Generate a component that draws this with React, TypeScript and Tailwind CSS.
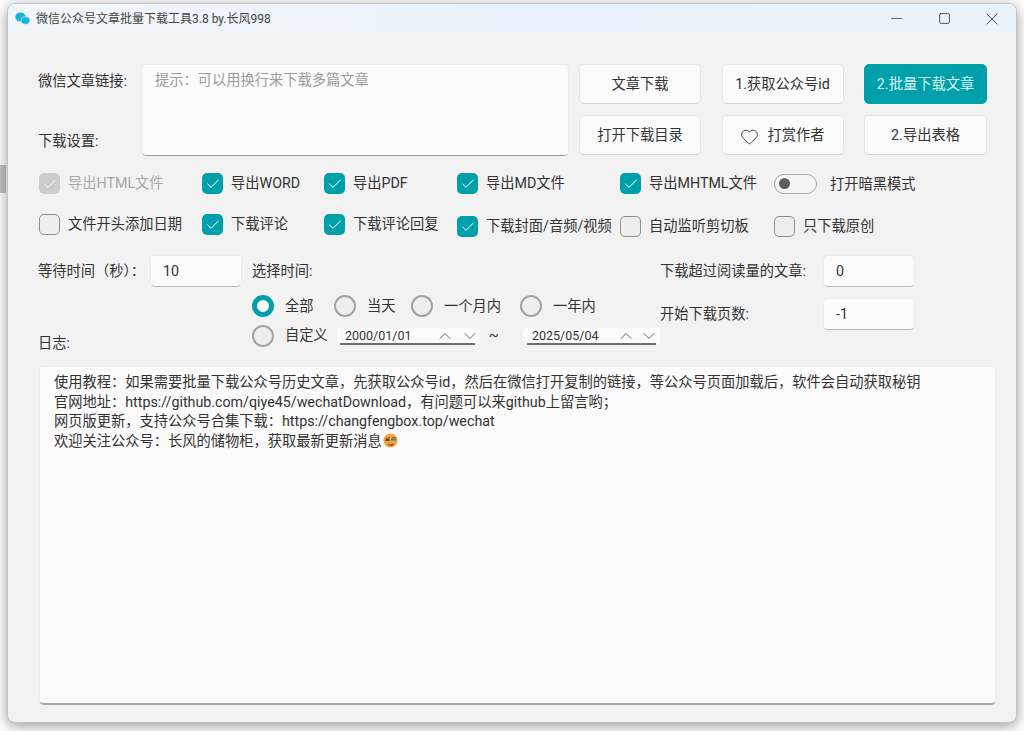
import { Check, ChevronDown, ChevronUp, Heart, Minus, Square, X } from 'lucide-react'

const FONT = "font-['Roboto','Noto_Sans_CJK_SC',sans-serif]"

// full-width punctuation used by the app's texts
const C = '\uFF1A'
const D = '\uFF0C'
const LOG = [
  `使用教程${C}如果需要批量下载公众号历史文章${D}先获取公众号id${D}然后在微信打开复制的链接${D}等公众号页面加载后${D}软件会自动获取秘钥`,
  `官网地址${C}https://github.com/qiye45/wechatDownload${D}有问题可以来github上留言哟\uFF1B`,
  `网页版更新${D}支持公众号合集下载${C}https://changfengbox.top/wechat`,
]

function Btn({ label, primary }: { label: React.ReactNode; primary?: boolean }) {
  return (
    <button
      className={`flex h-10 items-center justify-center rounded-[5px] border pt-[2px] ${
        primary
          ? 'border-[#00a0ab] bg-[#00a0ab] text-[#d9f3f4]'
          : 'border-[#e6e6e6] border-b-[#d2d2d2] bg-[#fbfbfb] text-[#333]'
      }`}
    >
      {label}
    </button>
  )
}

function Box({ checked, disabled, label, low }: { checked?: boolean; disabled?: boolean; label: string; low?: boolean }) {
  let box = 'border border-[#8f8f8f] bg-[#eeeeee]'
  if (checked) box = 'bg-[#00a0ab]'
  if (disabled) box = 'bg-[#cccccc]'
  return (
    <div className={`flex h-[21px] items-center gap-2 whitespace-nowrap ${low ? 'mt-[2px]' : ''}`}>
      <span className={`flex size-[21px] shrink-0 items-center justify-center rounded-[5px] ${box}`}>
        {checked && <Check size={16} strokeWidth={1.5} className="text-white" />}
      </span>
      <span className={`pt-px ${disabled ? 'text-[#a8a8a8]' : 'text-[#333]'}`}>{label}</span>
    </div>
  )
}

function Radio({ on, label, width }: { on?: boolean; label: string; width: string }) {
  return (
    <div className={`flex items-center gap-[11px] whitespace-nowrap ${width}`}>
      {on ? (
        <span className="size-[22px] shrink-0 rounded-full border-[5px] border-[#00a0ab] bg-white" />
      ) : (
        <span className="size-[22px] shrink-0 rounded-full border-2 border-[#a3a3a3] bg-[#eeeeee]" />
      )}
      <span className="pt-px">{label}</span>
    </div>
  )
}

function NumInput({ value }: { value: string }) {
  return (
    <div className="flex h-8 w-[92px] items-center rounded-[5px] border border-[#ececec] border-b-[#b9b9b9] bg-[#fbfbfb] pl-3 pt-[2px] text-[#333]">
      {value}
    </div>
  )
}

function DateEdit({ value, width, chevrons, line }: { value: string; width: string; chevrons: string; line: string }) {
  return (
    <div className={`relative flex h-4 items-center rounded-[4px] bg-[#fbfbfb] text-[12.5px] text-[#333] ${width}`}>
      <span className="pt-[2px]">{value}</span>
      <span className={`ml-auto flex items-center ${chevrons}`}>
        <ChevronUp size={20} strokeWidth={0.9} />
        <ChevronDown size={20} strokeWidth={0.9} />
      </span>
      <span className={`absolute -bottom-px h-0.5 bg-[#6f6f6f] ${line}`} />
    </div>
  )
}

function Emoji() {
  return (
    <svg width="15" height="15" viewBox="0 0 15 15" className="ml-px inline-block align-[-2px]">
      <circle cx="7.5" cy="7.5" r="7" fill="#f6a33b" />
      <path d="M3 5.5 7 4.5M9 5l3.5-.5" stroke="#7a4a1e" strokeWidth="1.2" fill="none" />
      <rect x="2.5" y="6" width="4" height="2" fill="#5b4a3a" />
      <rect x="8" y="5.5" width="5" height="2" fill="#3f7fb5" />
      <path d="M5 11.5c2 1 4 .8 5.5-.5" stroke="#8a3b1e" strokeWidth="1.2" fill="none" />
    </svg>
  )
}

export default function App() {
  return (
    <div className={`relative h-[731px] w-[1024px] overflow-hidden bg-white pl-[7px] pt-[3px] text-[14.25px] text-[#333] ${FONT}`}>
      {/* bit of the desktop showing left of the window */}
      <div className="absolute left-0 top-[165px] h-7 w-[6px] bg-[#c2c2c2]" />
      <div className="relative h-[720px] w-[1010px] overflow-hidden rounded-lg border border-[#c4c4c4] bg-[#f2f2f2] shadow-[0_3px_14px_rgba(0,0,0,0.4)]">
        {/* title bar */}
        <div className="flex h-[29px] items-center bg-gradient-to-r from-[#f2f6fa] via-[#e9f2fa] to-[#ebf3fa] pl-[7px]">
          <svg width="15" height="13" viewBox="0 0 15 13">
            <ellipse cx="5.5" cy="5" rx="5.2" ry="4.5" fill="#12b7e0" />
            <ellipse cx="10.5" cy="8.5" rx="4.3" ry="3.8" fill="#12b7e0" stroke="#e9f2fa" strokeWidth="0.6" />
          </svg>
          <span className="ml-[6px] text-xs text-[#444]">微信公众号文章批量下载工具3.8 by.长风998</span>
          <div className="ml-auto flex items-center text-[#333]">
            <span className="flex w-12 justify-center">
              <Minus size={17} strokeWidth={1} />
            </span>
            <span className="flex w-12 justify-center">
              <Square size={13} strokeWidth={1.5} />
            </span>
            <span className="flex w-12 justify-center">
              <X size={20} strokeWidth={1} />
            </span>
          </div>
        </div>

        <div className="pl-[31px] pr-[20px]">
          {/* link input + buttons */}
          <div className="mt-[31px] flex">
            <div className="-ml-px flex w-[103px] flex-col justify-between py-[7px]">
              <span>微信文章链接:</span>
              <span className="-mb-[3px]">下载设置:</span>
            </div>
            <div className="h-[92px] w-[428px] rounded-[5px] border border-[#ececec] border-b-[#9a9a9a] bg-[#fbfbfb] pl-[13px] pt-[5px] text-[#9c9c9c]">
              {`提示${C}可以用换行来下载多篇文章`}
            </div>
            <div className="ml-[10px] grid grid-cols-[122px_122px_123px] gap-x-[20.5px] gap-y-[10px]">
              <Btn label="文章下载" />
              <Btn label="1.获取公众号id" />
              <Btn label="2.批量下载文章" primary />
              <Btn label="打开下载目录" />
              <Btn
                label={
                  <span className="flex items-center gap-[8px]">
                    <Heart size={19} strokeWidth={1.1} />
                    打赏作者
                  </span>
                }
              />
              <Btn label="2.导出表格" />
            </div>
          </div>

          {/* options */}
          <div className="mt-[17px] grid grid-cols-[163px_122px_133px_163px_154px_1fr] gap-y-[20px]">
            <Box checked disabled label="导出HTML文件" />
            <Box checked label="导出WORD" />
            <Box checked label="导出PDF" />
            <Box checked label="导出MD文件" />
            <Box checked label="导出MHTML文件" />
            <div className="flex h-[21px] items-center gap-[13px] whitespace-nowrap">
              <span className="flex h-5 w-[43px] items-center rounded-full border border-[#a5a5a5] bg-[#f5f5f5] pl-[4px]">
                <span className="size-[11px] rounded-full bg-[#5f5f5f]" />
              </span>
              <span className="pt-[2px]">打开暗黑模式</span>
            </div>
            <Box label="文件开头添加日期" />
            <Box checked label="下载评论" />
            <Box checked label="下载评论回复" />
            <Box checked low label="下载封面/音频/视频" />
            <Box low label="自动监听剪切板" />
            <Box low label="只下载原创" />
          </div>

          {/* time settings */}
          <div className="mt-[18px] flex h-[111px]">
            <div className="flex w-[213px] flex-col justify-between pb-[12px]">
              <div className="flex items-center">
                <span className="-ml-px w-[112px] whitespace-nowrap pt-[2px]">{`等待时间\uFF08秒\uFF09${C}`}</span>
                <NumInput value="10" />
              </div>
              <span className="-ml-px">日志:</span>
            </div>
            <div className="w-[408px]">
              <div className="flex h-8 items-center pt-[2px]">选择时间:</div>
              <div className="mt-[8px] flex">
                <Radio on label="全部" width="w-[82px]" />
                <Radio label="当天" width="w-[77px]" />
                <Radio label="一个月内" width="w-[109px]" />
                <Radio label="一年内" width="w-[100px]" />
              </div>
              <div className="mt-[7px] flex items-center">
                <Radio label="自定义" width="w-[85px]" />
                <DateEdit value="2000/01/01" width="w-[143px] pl-[8px]" chevrons="gap-[5px]" line="left-[3px] right-[5px]" />
                <span className="w-[43px] pl-[9px]">~</span>
                <DateEdit value="2025/05/04" width="w-[137px] pl-[9px]" chevrons="gap-[3px] pr-px" line="left-[4px] right-[4px]" />
              </div>
            </div>
            <div>
              <div className="flex items-center">
                <span className="w-[163px] whitespace-nowrap pt-px">下载超过阅读量的文章:</span>
                <NumInput value="0" />
              </div>
              <div className="mt-[11px] flex items-center">
                <span className="w-[163px] pt-[2px]">开始下载页数:</span>
                <NumInput value="-1" />
              </div>
            </div>
          </div>

          {/* log */}
          <div className="h-[339px] rounded-[5px] border border-[#ececec] border-b-2 border-b-[#a5a5a5] bg-[#fbfbfb] pl-[14px] pt-[6px] leading-[19.7px] text-[#333]">
            {LOG.map((line) => (
              <div key={line}>{line}</div>
            ))}
            <div>
              {`欢迎关注公众号${C}长风的储物柜${D}获取最新更新消息`}
              <Emoji />
            </div>
          </div>
        </div>
      </div>
    </div>
  )
}
